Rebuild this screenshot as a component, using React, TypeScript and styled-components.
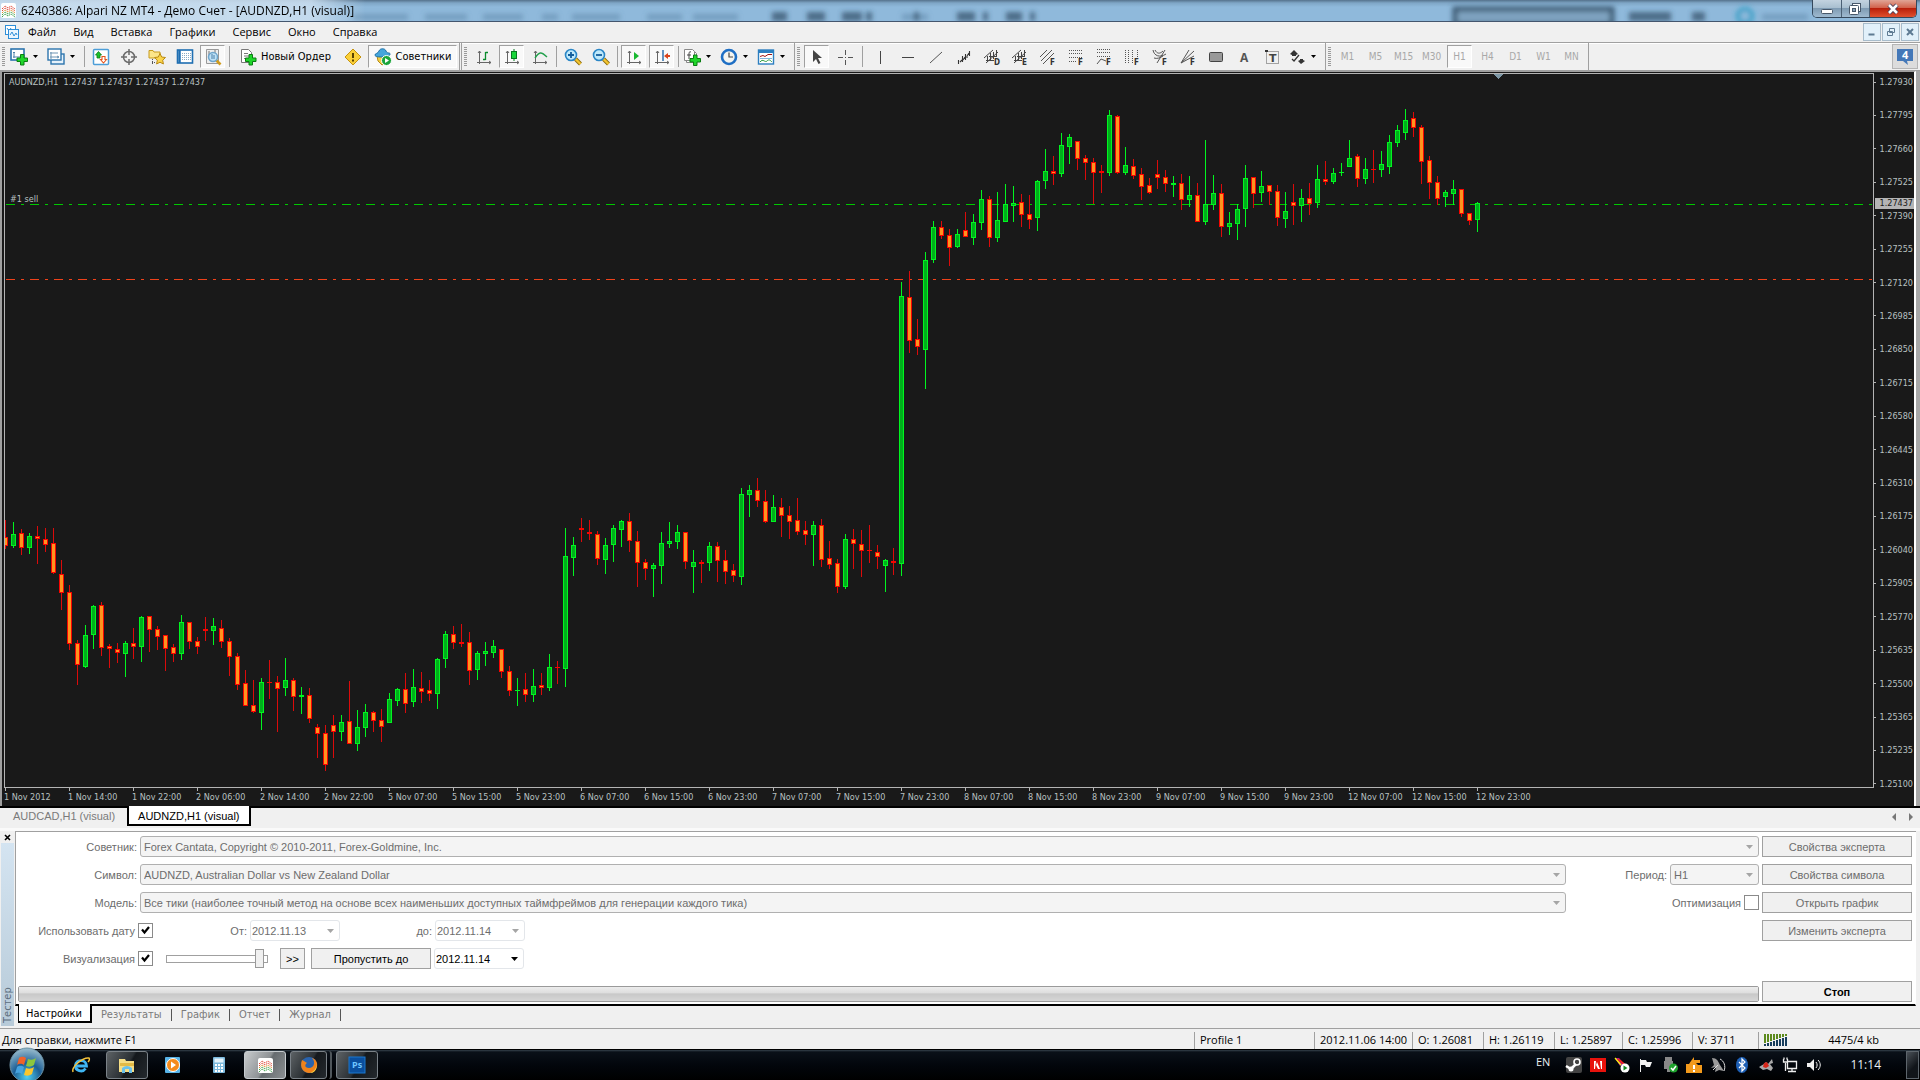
import React, { useState } from "react";
import styled, { createGlobalStyle, css } from "styled-components";

const uiFont = `"Open Sans", "Noto Sans", sans-serif`;
const tahoma = `"DejaVu Sans Condensed", "DejaVu Sans", sans-serif`;
const sansSerif = `"Liberation Sans", Arial, sans-serif`;

const Global = createGlobalStyle`
  * { box-sizing: border-box; }
  body { margin: 0; background: #f0f0f0; font: 11px/14px ${tahoma}; color: #000; }
  button, input, select { font: inherit; color: inherit; margin: 0; }
  button { padding: 0; border: 0; background: none; }
  svg { display: block; flex: none; overflow: visible; }
`;

const Shell = styled.div`
  min-height: 100vh;
  display: flex;
  flex-direction: column;
`;

/* ---------- title bar ---------- */

const TitleBar = styled.header`
  position: relative;
  height: 22px;
  display: flex;
  align-items: flex-start;
  justify-content: space-between;
  background: linear-gradient(#55728c 0, #7fa6c6 3px, #8fb9db 7px, #8fb9db 100%);
  border-bottom: 1px solid #44566e;
  overflow: hidden;
`;

const Backdrop = styled.svg`
  position: absolute;
  inset: 0;
  width: 100%;
  height: 100%;
`;

const Title = styled.h1`
  position: relative;
  margin: 0;
  padding: 2px 12px 2px 1px;
  display: flex;
  align-items: center;
  gap: 5px;
  font: 12px/17px ${uiFont};
  white-space: pre;
  background: linear-gradient(90deg, rgba(205, 224, 240, 0.9) 0, rgba(205, 224, 240, 0.85) 85%, rgba(200, 222, 240, 0) 100%);
`;

const WindowButtons = styled.div`
  position: relative;
  display: flex;
  width: 105px;
  height: 18px;
  margin-right: 3px;
  border: 1px solid #35485c;
  border-top: 0;
  border-radius: 0 0 5px 5px;
  overflow: hidden;
`;

const WindowButton = styled.button<{ $close?: boolean }>`
  display: grid;
  place-items: center;
  flex: ${(p) => (p.$close ? "0 0 47px" : "1")};
  border-left: 1px solid #4b6075;
  background: ${(p) =>
    p.$close
      ? "linear-gradient(#e0a596 0, #d2634c 45%, #b9200b 50%, #e0502f 100%)"
      : "linear-gradient(#c3d3e0 0, #a9bfd0 45%, #7f9bb3 50%, #9fbad0 100%)"};
  &:first-child { border-left: 0; }
`;

/* ---------- menu ---------- */

const MenuBar = styled.nav`
  height: 20px;
  display: flex;
  align-items: center;
  padding: 0 1px 0 5px;
  background: #f0f0f0;
`;

const MenuItem = styled.button`
  height: 20px;
  padding: 0 8px 0 9px;
  font: 11px/20px ${uiFont};
`;

const MdiButtons = styled.div`
  display: flex;
  gap: 1px;
  margin-left: auto;
`;

const MdiButton = styled.button`
  width: 18px;
  height: 18px;
  display: grid;
  place-items: center;
  border: 1px solid #a8bccb;
  background: #e1f0fa;
`;

/* ---------- toolbar ---------- */

const ToolBar = styled.div`
  height: 29px;
  display: flex;
  align-items: stretch;
  border-top: 1px solid #a0a0a0;
  border-bottom: 1px solid #a0a0a0;
  box-shadow: inset 0 1px #fff;
  background: #f0f0f0;
`;

const ToolGroup = styled.div<{ $double?: boolean }>`
  display: flex;
  align-items: center;
  padding: 0 2px;
  border-right: 1px solid #a0a0a0;
  ${(p) =>
    p.$double &&
    css`
      padding-right: 0;
      border-right: 3px double #a0a0a0;
    `}
`;

const Grip = styled.span`
  width: 3px;
  height: 20px;
  margin-right: 3px;
  background: repeating-linear-gradient(#9a9a9a 0 1px, #f0f0f0 1px 2px);
`;

const Separator = styled.span<{ $wide?: boolean }>`
  width: 1px;
  height: 21px;
  margin: 0 ${(p) => (p.$wide ? 3 : 2)}px;
  background: #a0a0a0;
`;

const ToolButton = styled.button<{ $pressed?: boolean; $w?: number }>`
  width: ${(p) => p.$w ?? 25}px;
  height: 23px;
  margin: 0 2px 0 1px;
  display: flex;
  align-items: center;
  justify-content: center;
  gap: 4px;
  border: 1px solid transparent;
  white-space: nowrap;
  ${(p) =>
    p.$pressed &&
    css`
      background: #f9f9f9;
      border-color: #a0a0a0 #fff #fff #a0a0a0;
    `}
`;

const DropButton = styled(ToolButton)`
  width: 34px;
  justify-content: flex-start;
  gap: 5px;
`;

const PeriodButton = styled(ToolButton)`
  color: #a8a8a8;
  font-size: 10px;
`;

const ChatButton = styled.button`
  width: 26px;
  height: 25px;
  margin: 1px 2px 0 auto;
  display: grid;
  place-items: center;
  border: 1px solid #b5b5b5;
  background: #dcdcdc;
`;

/* ---------- chart ---------- */

const ChartWindow = styled.main`
  flex: 1;
  display: grid;
  grid-template-columns: 1fr 40px;
  grid-template-rows: 1fr 18px;
  min-height: 400px;
  padding: 1px 0 0 2px;
  margin: 0 4px 0 0;
  border: solid #a0a0a0;
  border-width: 1px 0 0 2px;
  border-right: 2px solid #fff;
  background: #191919;
  color: #b8c0c0;
  font: 9px/12px ${tahoma};
  box-shadow: 4px 0 #a8a8a8;
`;

const Plot = styled.section`
  position: relative;
  border: 1px solid #b4b4b4;
  overflow: hidden;
`;

const PlotDrawing = styled.svg`
  position: absolute;
  width: 100%;
  height: 100%;
`;

const Quote = styled.p`
  position: relative;
  margin: 2px 4px;
  white-space: pre;
`;

const OrderTag = styled.span`
  position: absolute;
  left: 5px;
  top: 119px;
`;

const PriceAxis = styled.aside`
  position: relative;
  display: flex;
  flex-direction: column;
  justify-content: space-between;
  margin: 3px 0 -2px;
  text-align: right;
`;

const Price = styled.span`
  display: flex;
  align-items: center;
  justify-content: space-between;
  padding-right: 1px;
  &::before { content: ""; width: 2px; height: 1px; background: #b4b4b4; }
`;

const CurrentPrice = styled.span`
  position: absolute;
  left: 1px;
  right: 0;
  top: 122px;
  height: 11px;
  padding-right: 1px;
  line-height: 11px;
  background: #b4b4b4;
  color: #191919;
`;

const TimeAxis = styled.footer`
  display: flex;
  overflow: hidden;
  white-space: nowrap;
`;

const TimeMark = styled.span`
  flex: 0 0 64px;
  height: 18px;
  padding-top: 3px;
  &::before { content: ""; display: block; width: 1px; height: 3px; margin: -3px 0 0 1px; background: #b4b4b4; }
`;

const ChartTabs = styled.div`
  height: 25px;
  display: flex;
  align-items: flex-start;
  padding-left: 1px;
  border-top: 2px solid #000;
  background: #f0f0f0;
  box-shadow: inset 0 -3px #fafafa;
`;

const ChartTab = styled.button<{ $active?: boolean }>`
  height: 19px;
  padding: 0 12px 2px;
  font: 11px/17px ${sansSerif};
  color: #7a7a7a;
  ${(p) =>
    p.$active &&
    css`
      color: #000;
      background: #fff;
      border: solid #000;
      border-width: 0 2px 2px;
      margin-top: -2px;
      height: 20px;
      padding: 2px 9px 0;
    `}
`;

const TabArrows = styled.div`
  display: flex;
  gap: 12px;
  margin: 5px 6px 0 auto;
`;

/* ---------- tester ---------- */

const Tester = styled.section`
  display: grid;
  grid-template-columns: 15px 1fr;
  height: 197px;
  background: #f0f0f0;
  padding-right: 4px;
  font: 11px/14px ${sansSerif};
`;

const Side = styled.div`
  display: flex;
  flex-direction: column;
  align-items: center;
  padding-right: 1px;
`;

const CloseButton = styled.button`
  width: 12px;
  height: 12px;
  display: grid;
  place-items: center;
`;

const SideTitle = styled.h2`
  flex: 1;
  align-self: stretch;
  margin: 0 0 2px 1px;
  padding-top: 3px;
  font: 11px/13px ${tahoma};
  color: #5b6c7c;
  writing-mode: vertical-rl;
  transform: rotate(180deg);
  background: linear-gradient(#b7cad8, #d4e4f1);
`;

const Body = styled.div`
  display: flex;
  flex-direction: column;
  border-top: 1px solid #a0a0a0;
`;

const Panel = styled.form`
  flex: 1;
  display: grid;
  grid-template-columns: 1fr 150px;
  align-content: space-between;
  gap: 3px;
  padding: 4px 3px 2px 0;
  border-left: 1px solid #a0a0a0;
  border-right: 1px solid #fff;
  border-bottom: 2px solid #000;
  background: #fff;
  color: #6d6d6d;
`;

const Stack = styled.div`
  display: flex;
  flex-direction: column;
  gap: 7px;
`;

const Row = styled.div`
  height: 21px;
  display: flex;
  align-items: center;
  gap: 3px;
`;

const Label = styled.label<{ $w?: number }>`
  flex: 0 0 ${(p) => (p.$w ? `${p.$w}px` : "auto")};
  text-align: right;
  white-space: nowrap;
`;

const RightCell = styled.div`
  flex: 0 0 190px;
  display: flex;
  align-items: center;
  justify-content: flex-end;
  gap: 3px;
`;

const SelectBox = styled.span<{ $w?: number; $date?: boolean }>`
  flex: ${(p) => (p.$w ? `0 0 ${p.$w}px` : "1 1 0")};
  height: 21px;
  display: grid;
  grid-template-columns: 1fr 16px;
  align-items: center;
  border: 1px solid ${(p) => (p.$date ? "#e3e6ea" : "#b0b0b0")};
  border-radius: 3px;
  background: ${(p) => (p.$date ? "#fff" : "#f4f4f4")};
`;

const Select = styled.select<{ $strong?: boolean }>`
  grid-area: 1 / 1 / 2 / 3;
  width: 100%;
  height: 19px;
  padding: 0 16px 0 ${(p) => (p.$strong === undefined ? 3 : 1)}px;
  border: 0;
  background: none;
  appearance: none;
  opacity: 1;
  color: ${(p) => (p.$strong ? "#000" : "#6d6d6d")};
`;

const SelectArrow = styled.svg`
  grid-area: 1 / 2;
  pointer-events: none;
  margin-left: 4px;
`;

const Check = styled.input`
  appearance: none;
  width: 15px;
  height: 15px;
  border: 1px solid #8a8a8a;
  background: #fff;
  &:checked {
    background: #fff
      url("data:image/svg+xml,%3Csvg xmlns='http://www.w3.org/2000/svg' viewBox='0 0 13 13'%3E%3Cpath d='M3 5.5l2.5 3L10 3' fill='none' stroke='black' stroke-width='2.2'/%3E%3C/svg%3E");
  }
`;

const Slider = styled.input`
  appearance: none;
  width: 102px;
  min-width: 0;
  height: 20px;
  margin: 0 9px 0 10px;
  background: linear-gradient(#a0a0a0, #a0a0a0) 0 6px / 100% 1px no-repeat,
    linear-gradient(#a0a0a0, #a0a0a0) 0 13px / 100% 1px no-repeat,
    linear-gradient(#a0a0a0, #a0a0a0) 0 6px / 1px 8px no-repeat,
    linear-gradient(#a0a0a0, #a0a0a0) 100% 6px / 1px 8px no-repeat;
  &::-webkit-slider-thumb {
    appearance: none;
    width: 9px;
    height: 19px;
    border: 1px solid #999;
    background: #f0f0f0;
  }
`;

const PushButton = styled.button<{ $w?: number; $live?: boolean; $bold?: boolean }>`
  width: ${(p) => (p.$w ? `${p.$w}px` : "100%")};
  height: 21px;
  border: 1px solid #a0a0a0;
  background: #f0f0f0;
  color: ${(p) => (p.$live ? "#000" : "#6d6d6d")};
  font-weight: ${(p) => (p.$bold ? 700 : 400)};
`;

const Progress = styled.progress`
  appearance: none;
  display: block;
  width: calc(100% - 2px);
  height: 16px;
  margin: 5px 0 0 2px;
  border: 1px solid #9a9a9a;
  border-radius: 2px;
  &::-webkit-progress-bar { background: linear-gradient(#ececec 0, #dedede 40%, #c8c8c8 50%, #d6d6d6 100%); }
`;

const TesterTabs = styled.div`
  height: 22px;
  display: flex;
  align-items: flex-start;
  padding-left: 3px;
`;

const TesterTab = styled.button<{ $active?: boolean }>`
  position: relative;
  height: 18px;
  padding: 0 10px 0 9px;
  font: 11px/18px ${tahoma};
  color: #7a7a7a;
  &::after { content: ""; position: absolute; right: 0; top: 3px; height: 12px; border-right: 1px solid #555; }
  ${(p) =>
    p.$active &&
    css`
      color: #000;
      margin-top: -2px;
      height: 19px;
      padding: 1px 8px 0 7px;
      background: #fff;
      border: solid #000;
      border-width: 0 2px 2px 1px;
      &::after { display: none; }
    `}
`;

/* ---------- status bar ---------- */

const StatusBar = styled.footer`
  height: 22px;
  display: flex;
  align-items: center;
  padding-top: 2px;
  border-top: 1px solid #a0a0a0;
  border-bottom: 1px solid #000;
  background: #f0f0f0;
  font: 11px/16px ${uiFont};
`;

const Hint = styled.span`
  flex: 1;
  padding-left: 2px;
`;

const StatusCell = styled.span<{ $w: number }>`
  flex: 0 0 ${(p) => p.$w}px;
  height: 17px;
  display: flex;
  justify-content: space-between;
  align-items: center;
  padding: 0 5px;
  white-space: nowrap;
  border-left: 1px solid #a0a0a0;
  &:last-child { padding-right: 41px; }
`;

/* ---------- taskbar ---------- */

const TaskBar = styled.footer`
  height: 30px;
  display: flex;
  align-items: center;
  padding-left: 5px;
  color: #e8eef2;
  background: linear-gradient(#36424c 0, #0a1018 2px, #02060c 50%, #000 100%);
`;

const Start = styled.button`
  align-self: flex-end;
  width: 44px;
  height: 36px;
  margin: -6px 11px -2px 0;
`;

const TaskButton = styled.button<{ $open?: boolean; $active?: boolean }>`
  width: 42px;
  height: 28px;
  margin-right: 4px;
  display: grid;
  place-items: center;
  border: 1px solid transparent;
  border-radius: 3px;
  ${(p) =>
    p.$open &&
    css`
      border-color: #7b8288;
      background: linear-gradient(120deg, #5d6265 0, #2b3034 50%, #14181c 55%, #24292d 100%);
    `}
  ${(p) =>
    p.$active &&
    css`
      border-color: #c6cbcf;
      background: linear-gradient(120deg, #c8cbcd 0, #8e9295 50%, #666b6f 55%, #8b8f92 100%);
    `}
`;

const Stacked = styled.span`
  display: flex;
  margin-right: 4px;
  padding-right: 3px;
  border-right: 2px solid #4f565b;
  border-radius: 3px;
  ${TaskButton} { width: 37px; margin-right: 0; }
`;

const Tray = styled.div`
  display: flex;
  align-items: center;
  gap: 8px;
  height: 100%;
  margin-left: auto;
  font: 11px/14px ${uiFont};
`;

const Language = styled.span`
  margin: -6px 8px 0 0;
`;

const Clock = styled.time`
  margin: 0 17px 0 20px;
  font-size: 12px;
`;

const ShowDesktop = styled.button`
  width: 13px;
  height: 28px;
  margin-right: 1px;
  border: 1px solid #5d656c;
  background: linear-gradient(135deg, #4a5057, #11151a 60%);
`;

/* ---------- icons ---------- */

const Svg = ({ w = 18, h = 18, children }: { w?: number; h?: number; children: React.ReactNode }) => (
  <svg width={w} height={h} viewBox={`0 0 ${w} ${h}`} fill="none" aria-hidden="true">
    {children}
  </svg>
);

const Caret = () => (
  <Svg w={5} h={3}>
    <path d="M0 0h5L2.500 3z" fill="#000" />
  </Svg>
);

const Plus = ({ x, y }: { x: number; y: number }) => (
  <path
    transform={`translate(${x} ${y})`}
    d="M4 .5h3.500V4H11v3.500H7.500V11H4V7.500H.5V4H4z"
    fill="#1fd62a"
    stroke="#0a7d12"
  />
);

const AppMark = () => (
  <Svg w={15} h={15}>
    <rect width="15" height="15" rx="2" fill="#fff" />
    <path d="M1 6l3-3 3 2 3-2 4 3M1 8l3-3 3 2 3-2 4 3" stroke="#e24a3b" strokeDasharray="1.500 .7" />
    <path d="M1 10l3-3 3 2 3-2 4 3" stroke="#e08c2c" strokeDasharray="1.500 .7" />
    <path d="M1 12l3-3 3 2 3-2 4 3M1 14l3-3 3 2 3-2 4 3" stroke="#3fa34c" strokeDasharray="1.500 .7" />
  </Svg>
);

const ChartDoc = () => (
  <Svg w={14} h={14}>
    <rect x=".5" y=".5" width="10" height="9" fill="#fff" stroke="#2f8fd8" />
    <path d="M2 3l2 3 2-3" stroke="#2f8fd8" />
    <rect x="3.500" y="4.500" width="10" height="9" fill="#e9f5ff" stroke="#2f8fd8" />
    <path d="M5 10l2-3 2 4 2-3 1 2" stroke="#2f8fd8" />
  </Svg>
);

const Axes = ({ children }: { children?: React.ReactNode }) => (
  <Svg>
    <path d="M4.500 3v13M2 14.500h14M3 5l1.500-2L6 5M14 13l2 1.500-2 1.500" stroke="#666" />
    {children}
  </Svg>
);

const Magnifier = ({ minus }: { minus?: boolean }) => (
  <Svg>
    <path d="M11.500 11l5 5" stroke="#8a6a0d" strokeWidth="4" />
    <path d="M11.500 11l5 5" stroke="#f3c531" strokeWidth="2.400" />
    <circle cx="7" cy="7" r="5.500" fill="#bfe9fb" stroke="#2a86c6" strokeWidth="1.600" />
    <path d={minus ? "M4 7h6" : "M4 7h6M7 4v6"} stroke="#135e9c" strokeWidth="1.800" />
  </Svg>
);

const Letter = ({ ch }: { ch: string }) => (
  <text x="11" y="17" fontSize="8" fontWeight="700" fontFamily="DejaVu Sans Condensed" fill="#333">
    {ch}
  </text>
);

const icons: Record<string, React.ReactNode> = {
  newChart: (
    <Svg>
      <rect x="1" y="1" width="13" height="11" fill="#fff" stroke="#2c74ad" strokeWidth="1.600" />
      <path d="M4 4v6M3 5l1-1 1 1M3 9h8M10 8l1 1-1 1" stroke="#4c81a8" />
      <Plus x={6.5} y={6} />
    </Svg>
  ),
  profiles: (
    <Svg>
      <rect x="4" y="6" width="13" height="10" fill="#e6f2fb" stroke="#2c74ad" strokeWidth="1.400" />
      <rect x="1" y="1" width="13" height="11" fill="#fff" stroke="#2c74ad" strokeWidth="1.400" />
      <path d="M4 4v7M3 5h8M3 9h9M10 8l2 1-2 1" stroke="#6d94b3" />
    </Svg>
  ),
  market: (
    <Svg>
      <rect x="1.500" y="1.500" width="15" height="15" rx="1" fill="#fff" stroke="#4d9ed8" strokeWidth="1.500" />
      <path d="M6.500 3.500l3 3.500H8v3H5V7H3.500z" fill="#19c22a" stroke="#0c7a18" strokeWidth=".8" />
      <path d="M11.500 15l3-3.500H13v-3h-3v3H8.500z" fill="#fff" stroke="#e5541b" strokeWidth="1.100" />
    </Svg>
  ),
  cross: (
    <Svg>
      <circle cx="9" cy="9" r="5.500" stroke="#6b6b6b" strokeWidth="1.500" />
      <path d="M9 1v6M9 11v6M1 9h6M11 9h6" stroke="#6b6b6b" strokeWidth="1.500" />
    </Svg>
  ),
  navigator: (
    <Svg>
      <path d="M1 2.500h4l1 1.500h6v6H1z" fill="#fce58a" stroke="#c79b1c" />
      <path d="M4.500 11v6M4 14.500h4" stroke="#555" strokeDasharray="1 1" />
      <path d="M12 5.500l1.700 3.500 3.800.5-2.800 2.700.7 3.800-3.400-1.800L8.600 16l.7-3.800-2.800-2.700 3.800-.5z" fill="#fbd44b" stroke="#b98a12" />
    </Svg>
  ),
  list: (
    <Svg>
      <rect x="1.500" y="2" width="15" height="13" fill="#fff" stroke="#1f6fb2" strokeWidth="1.600" />
      <path d="M3.500 2v13" stroke="#1f6fb2" strokeWidth="2.500" />
      <path d="M6 5.500h9M6 7.500h9M6 9.500h9M6 11.500h9" stroke="#8aaac4" strokeDasharray="1 1" />
    </Svg>
  ),
  tester: (
    <Svg>
      <path d="M2.500 1.500h12v14h-12z" fill="#eee" stroke="#999" />
      <path d="M5 3v5M11 2v5" stroke="#777" />
      <path d="M12 12l4.500 4.500" stroke="#d09c1e" strokeWidth="2.600" />
      <circle cx="9" cy="9" r="4.500" fill="#bfe2f7" stroke="#6fa6cd" strokeWidth="1.500" />
      <path d="M8 6v5M10 7v4" stroke="#4a7fa8" />
    </Svg>
  ),
  order: (
    <Svg>
      <path d="M2.500 1.500h7l3 3v10h-10z" fill="#fff" stroke="#777" />
      <path d="M5 5.500h4M5 8h5M5 10.500h3" stroke="#777" />
      <Plus x={6} y={6} />
    </Svg>
  ),
  warning: (
    <Svg>
      <path d="M9 1l8 8-8 8-8-8z" fill="#fbd038" stroke="#c6930f" strokeLinejoin="round" />
      <path d="M9 5v5M9 11.500v2" stroke="#5a4200" strokeWidth="2" />
    </Svg>
  ),
  experts: (
    <Svg>
      <path d="M3 8h11l-1 6-5 3-4-4z" fill="#f6cf45" stroke="#b48a16" />
      <path d="M1 7c0-2 3-1 4-4s6-3 7 0 4 1 4 3-3 3-7 3-8 0-8-2z" fill="#45a6dc" stroke="#1f6fa5" />
      <circle cx="12.500" cy="12.500" r="5" fill="#1ba53a" stroke="#fff" />
      <path d="M11 10l4 2.500-4 2.500z" fill="#fff" />
    </Svg>
  ),
  bars: <Axes><path d="M10.500 4v8M10.500 4.500H13M8 11.500h2.500" stroke="#0a8a2c" strokeWidth="1.300" /></Axes>,
  candles: <Axes><path d="M11 1v12" stroke="#067a20" /><rect x="8.500" y="3.500" width="5" height="7" fill="#19d63a" stroke="#067a20" /></Axes>,
  line: <Axes><path d="M4 10c4-6 6-7 12-1" stroke="#22a04c" strokeWidth="1.400" /></Axes>,
  zoomIn: <Magnifier />,
  zoomOut: <Magnifier minus />,
  scroll: <Axes><path d="M9 4l5 4-5 4z" fill="#18b82f" /></Axes>,
  shift: <Axes><path d="M10 2v11" stroke="#2367a8" strokeWidth="1.400" /><path d="M11 8l4-3v2h2v2h-2v2z" fill="#d8431b" /></Axes>,
  indicators: (
    <Svg>
      <path d="M3.500 3.500h8l2 2v9h-10z" fill="#fff" stroke="#888" />
      <path d="M1.500 1.500h8l2 2v9h-10z" fill="#fff" stroke="#888" />
      <path d="M8 4c-2-1-2 1-2 2v5M4 7h4" stroke="#444" />
      <Plus x={6.5} y={6.5} />
    </Svg>
  ),
  clock: (
    <Svg>
      <circle cx="9" cy="9" r="7" fill="#f5f5f0" stroke="#1f6fc4" strokeWidth="2.600" />
      <path d="M9 4.500V9h4" stroke="#444" strokeWidth="1.200" />
    </Svg>
  ),
  template: (
    <Svg>
      <rect x="1.500" y="2" width="15" height="14" fill="#fff" stroke="#2d7fc0" strokeWidth="1.400" />
      <path d="M1.500 3.500h15" stroke="#2d7fc0" strokeWidth="3" />
      <path d="M3 8.500l3-1 2 1 3-2h4" stroke="#a01414" />
      <path d="M3 10.500h12" stroke="#2d7fc0" strokeWidth=".6" />
      <path d="M3 14c3-4 5 1 7-1s3-1 5 1" stroke="#2b9b3c" />
    </Svg>
  ),
  pointer: <Svg><path d="M5 2v12l3-3 2.500 5 2-1-2.500-5h4z" fill="#444" /></Svg>,
  crosshair: <Svg><path d="M9.500 2v5M9.500 12v5M2 9.500h5M12 9.500h5M9 9.500h1" stroke="#555" /></Svg>,
  vline: <Svg><path d="M9.500 3v13" stroke="#444" /></Svg>,
  hline: <Svg><path d="M3 9.500h12" stroke="#444" /></Svg>,
  trend: <Svg><path d="M3 15L15 4" stroke="#555" /></Svg>,
  zig: <Svg><path d="M3.500 16v-4M5 14l2-2M7.500 14V8M8 12l2-3M10.500 12V6M12 8v2M12 8l2-3M14.500 8V3" stroke="#333" strokeWidth="1.100" /></Svg>,
  zigD: <Svg><path d="M1 10L10 2M3 15L15 4M4.500 8v6M7.500 5v8M10.500 4v7M13.500 2v7M3 12.500h8M6 8.500h8" stroke="#444" /><Letter ch="D" /></Svg>,
  zigE: <Svg><path d="M1 10L10 2M3 15L15 4M4.500 8v6M7.500 5v8M10.500 4v7M13.500 2v7M3 12.500h8M6 8.500h8" stroke="#444" /><Letter ch="E" /></Svg>,
  fiboCh: <Svg><path d="M1 9L8 2M2 13L13 2M4 16L15 5" stroke="#555" /><Letter ch="F" /></Svg>,
  fibo: <Svg><path d="M2 2.500h14M2 5.500h14M2 9.500h14M2 13.500h8" stroke="#555" strokeDasharray="1 1" /><Letter ch="F" /></Svg>,
  fiboExp: <Svg><path d="M2 1.500h14M2 4.500h14M2 8.500h14" stroke="#555" strokeDasharray="1 1" /><path d="M2 16l4-5 5 2" stroke="#555" /><Letter ch="F" /></Svg>,
  fiboTime: <Svg><path d="M2.500 2v14M5.500 2v14M9.500 2v14M14.500 2v9" stroke="#555" strokeDasharray="1 1" /><Letter ch="F" /></Svg>,
  fiboArc: <Svg><path d="M2 2c1 6 7 8 13 4M4 2c2 4 5 4 8 1M14 2L6 15M3 10c3 1 6 0 9-2" stroke="#555" /><Letter ch="F" /></Svg>,
  fiboFan: <Svg><path d="M2 15L15 3M2 15L10 2M2 15l13-7" stroke="#555" /><Letter ch="F" /></Svg>,
  rect: <Svg><rect x="2.500" y="4.500" width="13" height="9" rx="1" fill="#999" stroke="#444" /></Svg>,
  text: <Svg><text x="5" y="14" fontSize="12" fontWeight="700" fontFamily="Open Sans" fill="#555">A</text></Svg>,
  label: (
    <Svg>
      <rect x="3.500" y="3.500" width="12" height="12" stroke="#555" strokeDasharray="1 1" />
      <text x="6" y="14" fontSize="11" fontWeight="700" fontFamily="DejaVu Sans" fill="#444">T</text>
      <rect x="2" y="2" width="3" height="2" fill="#333" />
    </Svg>
  ),
  arrows: <Svg><path d="M6 2l4 4-2 1v1H4V7L2 6zM13 16l4-3-2-1v-1h-3v1l-2 1z" fill="#333" /><path d="M4 11l2 2 5-6" stroke="#333" strokeWidth="1.300" /></Svg>,
};

/* ---------- chart data ---------- */

/*
 * Each bar is "direction high bodyTop bodyBottom low". Levels are counted downwards
 * in thirds of a pixel row from the origin of the session they belong to.
 */
const sessions: { origin: number; bars: string }[] = [
  {
    origin: 426,
    bars:
      "r 60 111 137 147,g 66 102 138 144,r 87 99 144 164,g 99 108 144 161,r 77 108 117 192,r 84 117 135 156,r 84 129 219 222,r 180 222 279 330," +
      "r 255 276 432 450,r 420 429 495 555,g 375 405 501 504,g 315 318 405 447,r 306 315 444 468,r 432 438 447 504,r 429 447 459 489,g 423 429 462 531," +
      "r 384 429 441 477,g 348 351 441 486,r 348 348 390 456,r 378 387 411 450,r 405 405 447 513,r 432 441 462 486,g 345 366 462 480,r 366 366 426 447," +
      "r 411 423 441 462,r 351 387 393 423,g 354 378 393 435,r 360 384 426 444,r 414 423 471 528,r 459 468 555 570,r 510 549 618 618,r 540 615 636 640," +
      "g 534 546 639 690,r 480 546 549 597,r 528 546 567 696,g 474 540 564 588,r 534 540 591 633,g 561 585 591 642,r 564 585 657 669,r 672 681 702 774," +
      "r 675 699 795 812,r 645 675 696 774,g 645 666 696 723,r 543 663 732 732,g 630 681 732 753,g 612 636 684 711,r 633 636 663 696,r 627 660 681 726," +
      "g 579 597 669 669,g 564 567 603 618,r 519 567 612 639,g 507 561 606 621",
  },
  {
    origin: 376,
    bars:
      "r 666 714 726 759,r 690 720 732 753,g 624 627 732 777,g 543 552 627 654,r 528 552 579 597,r 522 576 582 591,r 546 576 663 705,g 603 609 660 690," +
      "g 576 603 612 648,g 570 588 609 624,r 597 597 666 684,r 648 663 723 738,g 684 720 723 768,r 669 717 735 756,g 657 708 735 756,r 669 705 714 735," +
      "g 612 651 714 723,r 633 651 654 702,g 234 318 657 711,g 261 285 324 378,r 204 234 240 276,r 210 246 252 270,r 243 252 327 345,g 264 285 330 372," +
      "g 225 234 285 336,g 210 213 240 291,r 189 213 273 306,r 243 273 339 411,r 327 336 357 390,g 339 345 357 441,g 246 279 348 402,g 216 273 282 294," +
      "g 225 246 276 297,r 246 246 336 357,g 300 336 351 429,r 330 336 342 399,g 276 288 339 363,r 276 288 333 396,r 300 330 366 402,r 342 360 378 396," +
      "g 114 132 381 405,g 105 120 135 201,r 84 120 153 171,r 120 153 216 219,g 135 171 216 216,r 144 171 198 261,r 168 195 216 267,r 144 210 246 255," +
      "r 213 240 255 285,g 213 225 255 348,r 207 225 330 351,r 273 324 345 357,r 327 339 411 429,g 252 267 411 417,r 237 267 282 357,r 240 282 303 381," +
      "r 225 300 303 339,r 285 306 321 357,g 327 330 348 426,r 294 333 339 375",
  },
  {
    origin: 16,
    bars:
      "g 576 618 1422 1458,r 543 621 753 789,r 687 747 771 795,g 486 510 780 897,g 393 411 510 519,r 393 411 438 447,r 417 435 474 528,g 417 432 471 474," +
      "r 366 420 441 441,g 372 396 444 465,g 300 327 399 420,r 318 327 444 471,g 306 390 444 456,g 282 342 396 396,g 288 339 348 396,r 312 336 375 411," +
      "r 315 372 390 417,g 270 273 384 423,g 177 243 273 297,r 198 243 252 285,g 129 165 252 261,g 132 141 171 222,r 153 153 207 240,r 195 204 219 270," +
      "r 204 216 249 342,r 225 243 249 309,g 60 75 249 258,r 75 78 249 252,g 171 225 249 255,r 207 228 258 267,r 234 252 291 330,r 264 285 309 312," +
      "r 210 252 264 297,r 240 261 282 306,g 258 279 285 321,r 252 279 330 360,g 258 315 330 351,r 279 315 396 396,g 150 342 396 405,g 255 309 345 360," +
      "r 282 309 411 441,g 366 399 411 435,g 342 357 402 450,g 225 264 357 411,r 261 261 312 354,g 243 288 309 336,r 285 285 306 345,r 285 303 384 408," +
      "g 306 363 387 414,r 282 336 348 405,g 297 324 348 396,r 279 324 342 375,g 225 267 339 354,r 213 267 276 285,g 234 249 276 282,g 219 246 249 258," +
      "g 150 204 231 231,r 192 198 267 291,g 204 237 267 282,r 180 237 240 279,g 183 222 240 261,g 135 156 231 252,g 105 120 159 171,g 57 90 129 150," +
      "r 66 84 114 141,r 105 111 216 282,r 198 210 279 327,r 258 276 327 345,g 300 306 321 351,g 270 297 312 345,r 297 297 372 381,r 369 369 393 405," +
      "g 336 339 390 426",
  },
];

const candles = sessions
  .flatMap(({ origin, bars }) =>
    bars.split(",").map((bar) => {
      const [dir, ...levels] = bar.split(" ");
      return { up: dir === "g", y: levels.map((v) => origin + Math.round(Number(v) / 3)) };
    })
  );

const Candle = ({ x, up, y }: { x: number; up: boolean; y: number[] }) => {
  const [high, top, bottom, low] = y;
  const edge = up ? "#00f51f" : "#f80400";
  return (
    <g>
      <rect x={x} y={high} width={1} height={Math.max(low - high, 1)} fill={up ? edge : "#dc0a0a"} />
      <rect x={x - 2} y={top} width={5} height={bottom - top} fill={edge} />
      {bottom - top > 2 && <rect x={x - 1} y={top + 1} width={3} height={bottom - top - 2} fill={up ? "#00ae1c" : "#ff931e"} />}
    </g>
  );
};

const prices = [
  ...Array.from({ length: 20 }, (_, i) => ((127930 - i * 135) / 100000).toFixed(5)),
  "1.25235",
  "1.25100",
];
const times = (
  "1 Nov 2012,1 Nov 14:00,1 Nov 22:00,2 Nov 06:00,2 Nov 14:00,2 Nov 22:00,5 Nov 07:00,5 Nov 15:00,5 Nov 23:00,6 Nov 07:00,6 Nov 15:00,6 Nov 23:00," +
  "7 Nov 07:00,7 Nov 15:00,7 Nov 23:00,8 Nov 07:00,8 Nov 15:00,8 Nov 23:00,9 Nov 07:00,9 Nov 15:00,9 Nov 23:00,12 Nov 07:00,12 Nov 15:00,12 Nov 23:00"
).split(",");

/* ---------- pieces ---------- */

type DropProps = { id: string; value: string; w?: number; date?: boolean; live?: boolean; label?: string };
const Drop = ({ id, value, w, date, live, label }: DropProps) => (
  <SelectBox $w={w} $date={date}>
    <Select id={id} disabled={!live} $strong={date ? !!live : undefined} aria-label={label}>
      <option>{value}</option>
    </Select>
    <SelectArrow width="7" height="4" viewBox="0 0 7 4">
      <path d="M0 0h7L3.500 4z" fill={live ? "#000" : "#a5a5a5"} />
    </SelectArrow>
  </SelectBox>
);

const Tools = ({ names, pressed = [] }: { names: string[]; pressed?: string[] }) => (
  <>
    {names.map((n) => (
      <ToolButton key={n} aria-label={n} $pressed={pressed.includes(n)}>
        {icons[n]}
      </ToolButton>
    ))}
  </>
);

const MenuTool = ({ name }: { name: string }) => (
  <DropButton aria-label={name}>
    {icons[name]}
    <Caret />
  </DropButton>
);

const smudges = [
  [352, 56], [425, 42], [483, 40], [542, 16], [572, 48], [647, 35], [693, 45], [902, 26], [1762, 46],
];
const darkSmudges = [[772, 15], [807, 18], [842, 20], [866, 6], [914, 5], [957, 18], [983, 5], [1006, 16], [1030, 5], [1629, 42], [1692, 13]];

const trayIcons: [string, React.ReactNode][] = [
  ["Steam", <Svg w={16} h={16}><rect width="16" height="16" rx="2" fill="#444" /><circle cx="11" cy="5" r="3" stroke="#fff" strokeWidth="1.600" /><circle cx="5" cy="12" r="2.500" fill="#fff" /><path d="M5 12l5-5M0 9l5 3" stroke="#fff" strokeWidth="2.600" /></Svg>],
  ["Adobe", <Svg w={16} h={16}><rect y="1" width="16" height="14" fill="#e8120c" /><path d="M4 12V4l2 0-1 8zM12 12V4l-2 0 1 8zM7 5l3 7H8L6 8z" fill="#fff" /></Svg>],
  ["Player", <Svg w={16} h={16}><path d="M1 1l5 8 4-2-5-6z" fill="#a1169b" /><path d="M1 1l6 7" stroke="#ff0" strokeWidth="1.200" /><path d="M4 2l7 6" stroke="#e22" strokeWidth="2" /><circle cx="11" cy="11" r="4.500" fill="#fff" /><path d="M9.500 8.500l4 2.500-4 2.500z" fill="#14871f" /></Svg>],
  ["Action center", <Svg w={16} h={16}><path d="M2.500 2v13" stroke="#eee" /><path d="M3 3h5l1 2h5l-2 5H8L7 8H3z" fill="#f2f2f2" /></Svg>],
  ["Safely remove", <Svg w={16} h={16}><path d="M3 0h7v4H3zM2 4h9v8H8v3H5v-3H2z" fill="#888" /><circle cx="11.500" cy="11" r="4.500" fill="#1fa32d" /><path d="M9 11l2 2 3-4" stroke="#fff" strokeWidth="1.500" /></Svg>],
  ["Castle", <Svg w={16} h={16}><path d="M0 7h3l2-3 3-4v3h6v3h-4l2 2h4v8H0z" fill="#f39a1b" /><path d="M7 8h2v4H7zM7 13h2v2H7z" fill="#fff" /></Svg>],
  ["Satellite", <Svg w={16} h={16}><path d="M2 1c5 0 6 3 8 7l4 6-5-1-4 2 1-5-5 1 3-3z" fill="#9a9a9a" /><path d="M10 2c4 2 6 7 4 12M3 13l5-5" stroke="#ddd" /></Svg>],
  ["Bluetooth", <Svg w={16} h={16}><ellipse cx="8" cy="8" rx="6" ry="8" fill="#1d5fb5" /><path d="M5 5l6 6-3 3V2l3 3-6 6" stroke="#fff" strokeWidth="1.200" /></Svg>],
  ["Device", <Svg w={16} h={16}><path d="M1 10l5-3 2-2 2 2 4-5 1 4-3 1 3 4-2 3-4-2-4 1z" fill="#aaa" /><path d="M6 6l3-1 2 4-3 2-3-1z" fill="#d6271b" /></Svg>],
  ["Network", <Svg w={16} h={16}><path d="M5.500 4.500h9v7h-9zM10 12v2.500M6 14.500h8M3.500 6v8M1.500 2v3h4V2M2 .500v2M5 .500v2" stroke="#eee" strokeWidth="1.300" /></Svg>],
  ["Volume", <Svg w={16} h={16}><path d="M1 6h3l4-4v12l-4-4H1z" fill="#eee" /><path d="M10 5c1.500 2 1.500 4 0 6M12 3c3 3 3 7 0 10" stroke="#eee" /></Svg>],
];

const App = () => {
  const [useDate, setUseDate] = useState(true);
  const [visual, setVisual] = useState(true);
  const [optimize, setOptimize] = useState(false);
  const [speed, setSpeed] = useState(96);

  return (
    <Shell>
      <Global />
      <TitleBar>
        <Backdrop aria-hidden="true">
          <defs>
            <filter id="soft" x="-5%" y="-100%" width="110%" height="300%">
              <feGaussianBlur stdDeviation="2.500" />
            </filter>
          </defs>
          <g filter="url(#soft)">
            {smudges.map(([x, w]) => <rect key={x} x={x} y={14} width={w} height={6} fill="#5f86a8" opacity=".55" />)}
            {darkSmudges.map(([x, w]) => <rect key={x} x={x} y={12} width={w} height={9} fill="#2f4b64" opacity=".7" />)}
            <rect x="1455" y="9" width="157" height="16" stroke="#3e5b74" strokeWidth="5" fill="#7ea3c0" />
            <circle cx="1745" cy="16" r="7" stroke="#2d9fc6" strokeWidth="4" fill="#8fb9db" />
          </g>
        </Backdrop>
        <Title><AppMark />6240386: Alpari NZ MT4 - Демо Счет - [AUDNZD,H1 (visual)]</Title>
        <WindowButtons>
          <WindowButton aria-label="Minimize"><Svg w={14} h={12}><rect x="1.500" y="6.500" width="11" height="4" rx="1" fill="#fff" stroke="#48586a" /></Svg></WindowButton>
          <WindowButton aria-label="Restore"><Svg w={14} h={14}><rect x="4.500" y="1.500" width="8" height="8" fill="#fff" stroke="#48586a" /><rect x="1.500" y="3.500" width="9" height="9" rx="1" fill="#fff" stroke="#48586a" /><rect x="4.500" y="6.500" width="3" height="3" fill="#8ba3b8" stroke="#48586a" /></Svg></WindowButton>
          <WindowButton $close aria-label="Close"><Svg w={14} h={12}><path d="M3 2l8 8M11 2l-8 8" stroke="#48405a" strokeWidth="4.500" /><path d="M3 2l8 8M11 2l-8 8" stroke="#fff" strokeWidth="2.600" /></Svg></WindowButton>
        </WindowButtons>
      </TitleBar>

      <MenuBar>
        <ChartDoc />
        {["Файл", "Вид", "Вставка", "Графики", "Сервис", "Окно", "Справка"].map((m) => <MenuItem key={m}>{m}</MenuItem>)}
        <MdiButtons>
          <MdiButton aria-label="Minimize chart"><Svg w={10} h={10}><path d="M1.500 7.500h6" stroke="#5d7a92" strokeWidth="2" /></Svg></MdiButton>
          <MdiButton aria-label="Restore chart"><Svg w={10} h={10}><path d="M3.500 1.500h5v4h-5zM1.500 4.500h5v4h-5z" fill="#e1f0fa" stroke="#5d7a92" /></Svg></MdiButton>
          <MdiButton aria-label="Close chart"><Svg w={10} h={10}><path d="M2 2l6 6M8 2l-6 6" stroke="#5d7a92" strokeWidth="2" /></Svg></MdiButton>
        </MdiButtons>
      </MenuBar>

      <ToolBar role="toolbar">
        <ToolGroup $double>
          <Grip />
          <MenuTool name="newChart" />
          <MenuTool name="profiles" />
          <Separator />
          <Tools names={["market", "cross", "navigator", "list", "tester"]} pressed={["tester"]} />
          <Separator />
          <ToolButton $w={104}>{icons.order}Новый Ордер</ToolButton>
          <Tools names={["warning"]} />
          <ToolButton $w={89} $pressed>{icons.experts}Советники</ToolButton>
        </ToolGroup>
        <ToolGroup>
          <Grip />
          <Tools names={["bars", "candles", "line"]} pressed={["candles"]} />
          <Separator />
          <Tools names={["zoomIn", "zoomOut"]} />
          <Separator />
          <Tools names={["scroll", "shift"]} pressed={["scroll", "shift"]} />
          <Separator />
          <MenuTool name="indicators" />
          <MenuTool name="clock" />
          <MenuTool name="template" />
        </ToolGroup>
        <ToolGroup>
          <Grip />
          <Tools names={["pointer", "crosshair"]} pressed={["pointer"]} />
          <Separator $wide />
          <Tools names={["vline", "hline", "trend", "zig", "zigD", "zigE", "fiboCh", "fibo", "fiboExp", "fiboTime", "fiboArc", "fiboFan", "rect", "text", "label"]} />
          <MenuTool name="arrows" />
        </ToolGroup>
        <ToolGroup>
          <Grip />
          {["M1", "M5", "M15", "M30", "H1", "H4", "D1", "W1", "MN"].map((p) => <PeriodButton key={p} $pressed={p === "H1"}>{p}</PeriodButton>)}
        </ToolGroup>
        <ChatButton aria-label="Messages">
          <Svg>
            <path d="M1 1h16v12h-6l1 4-5-4H1z" fill="#4478b8" />
            <text x="6" y="11" fontSize="11" fontWeight="700" fontFamily="Open Sans" fill="#fff">4</text>
          </Svg>
        </ChatButton>
      </ToolBar>

      <ChartWindow>
        <Plot>
          <PlotDrawing shapeRendering="crispEdges">
            <line x1="1" x2="100%" y1="130.500" y2="130.500" stroke="#00c800" strokeDasharray="9 6 3 6" />
            <line x1="1" x2="100%" y1="205.500" y2="205.500" stroke="#f0421a" strokeDasharray="9 6 3 6" />
            {candles.map((c, i) => <Candle key={i} x={i * 8} up={c.up} y={c.y} />)}
            <path d="M1489 0h9l-4.500 5z" fill="#7d97a6" />
          </PlotDrawing>
          <Quote>AUDNZD,H1  1.27437 1.27437 1.27437 1.27437</Quote>
          <OrderTag>#1 sell</OrderTag>
        </Plot>
        <PriceAxis>
          {prices.map((p) => <Price key={p}>{p}</Price>)}
          <CurrentPrice>1.27437</CurrentPrice>
        </PriceAxis>
        <TimeAxis>{times.map((t) => <TimeMark key={t}>{t}</TimeMark>)}</TimeAxis>
      </ChartWindow>

      <ChartTabs>
        <ChartTab>AUDCAD,H1 (visual)</ChartTab>
        <ChartTab $active>AUDNZD,H1 (visual)</ChartTab>
        <TabArrows>
          <Svg w={5} h={8}><path d="M4 0v8L0 4z" fill="#777" /></Svg>
          <Svg w={5} h={8}><path d="M0 0v8l4-4z" fill="#777" /></Svg>
        </TabArrows>
      </ChartTabs>

      <Tester>
        <Side>
          <CloseButton aria-label="Close tester"><Svg w={7} h={7}><path d="M1 1l5 5M6 1L1 6" stroke="#000" strokeWidth="1.600" /></Svg></CloseButton>
          <SideTitle>Тестер</SideTitle>
        </Side>
        <Body>
          <Panel onSubmit={(e) => e.preventDefault()}>
            <Stack>
              <Row>
                <Label $w={121} htmlFor="expert">Советник:</Label>
                <Drop id="expert" value="Forex Cantata, Copyright © 2010-2011, Forex-Goldmine, Inc." />
              </Row>
              <Row>
                <Label $w={121} htmlFor="symbol">Символ:</Label>
                <Drop id="symbol" value="AUDNZD, Australian Dollar vs New Zealand Dollar" />
                <RightCell>
                  <Label htmlFor="period">Период:</Label>
                  <Drop id="period" value="H1" w={89} />
                </RightCell>
              </Row>
              <Row>
                <Label $w={121} htmlFor="model">Модель:</Label>
                <Drop id="model" value="Все тики (наиболее точный метод на основе всех наименьших доступных таймфреймов для генерации каждого тика)" />
                <RightCell>
                  <Label htmlFor="optimize">Оптимизация</Label>
                  <Check id="optimize" type="checkbox" checked={optimize} onChange={(e) => setOptimize(e.target.checked)} />
                </RightCell>
              </Row>
              <Row>
                <Label $w={119} htmlFor="usedate">Использовать дату</Label>
                <Check id="usedate" type="checkbox" checked={useDate} onChange={(e) => setUseDate(e.target.checked)} />
                <Label $w={91} htmlFor="from">От:</Label>
                <Drop id="from" value="2012.11.13" w={90} date />
                <Label $w={89} htmlFor="to">до:</Label>
                <Drop id="to" value="2012.11.14" w={90} date />
              </Row>
              <Row>
                <Label $w={119} htmlFor="visual">Визуализация</Label>
                <Check id="visual" type="checkbox" checked={visual} onChange={(e) => setVisual(e.target.checked)} />
                <Slider type="range" aria-label="Скорость" value={speed} onChange={(e) => setSpeed(Number(e.target.value))} />
                <PushButton type="button" $w={25} $live>&gt;&gt;</PushButton>
                <span />
                <PushButton type="button" $w={120} $live>Пропустить до</PushButton>
                <Drop id="skipto" value="2012.11.14" w={90} date live label="Пропустить до" />
              </Row>
            </Stack>
            <Stack>
              {["Свойства эксперта", "Свойства символа", "Открыть график", "Изменить эксперта"].map((b) => <PushButton type="button" key={b}>{b}</PushButton>)}
            </Stack>
            <Progress value={0} max={100} aria-label="Ход тестирования" />
            <PushButton type="button" $live $bold>Стоп</PushButton>
          </Panel>
          <TesterTabs>
            {["Настройки", "Результаты", "График", "Отчет", "Журнал"].map((t, i) => <TesterTab key={t} $active={i === 0}>{t}</TesterTab>)}
          </TesterTabs>
        </Body>
      </Tester>

      <StatusBar>
        <Hint>Для справки, нажмите F1</Hint>
        <StatusCell $w={120}>Profile 1</StatusCell>
        <StatusCell $w={98}>2012.11.06 14:00</StatusCell>
        <StatusCell $w={71}>O: 1.26081</StatusCell>
        <StatusCell $w={71}>H: 1.26119</StatusCell>
        <StatusCell $w={68}>L: 1.25897</StatusCell>
        <StatusCell $w={70}>C: 1.25996</StatusCell>
        <StatusCell $w={66}>V: 3711</StatusCell>
        <StatusCell $w={162}>
          <Svg w={24} h={12}>
            {Array.from({ length: 8 }, (_, i) => (
              <g key={i}>
                <rect x={i * 3} y={0} width={2} height={9 - i} fill="#5c8a1c" />
                <rect x={i * 3} y={10 - i} width={2} height={2 + i} fill="#173d5c" />
              </g>
            ))}
          </Svg>
          4475/4 kb
        </StatusCell>
      </StatusBar>

      <TaskBar>
        <Start aria-label="Start">
          <Svg w={44} h={36}>
            <defs>
              <radialGradient id="orb" cx=".5" cy=".85" r=".8">
                <stop offset="0" stopColor="#4fd0f2" />
                <stop offset=".5" stopColor="#1c5f96" />
                <stop offset="1" stopColor="#8fb4c8" />
              </radialGradient>
            </defs>
            <circle cx="22" cy="19" r="17" fill="url(#orb)" stroke="#6d93a6" />
            <path d="M14 12c3-2 5-1 7 0l-2 7c-2-1-4-2-7 0z" fill="#f0622a" />
            <path d="M23 13c3 1 5 1 8-1l-2 7c-3 2-5 2-8 1z" fill="#8cc63e" />
            <path d="M12 21c3-2 5-1 7 0l-2 7c-2-1-4-2-7 0z" fill="#46a3e0" />
            <path d="M21 22c3 1 5 1 8-1l-2 7c-3 2-5 2-8 1z" fill="#fbc62c" />
          </Svg>
        </Start>
        <TaskButton aria-label="Internet Explorer"><Svg><path d="M3.500 10h11c0-7-10.500-7-11-1s7 8 10 3.500" stroke="#3fb5f2" strokeWidth="2.800" /><path d="M1 16c-2-5 10-15 16-14 1 1 0 3-1 4" stroke="#f5c23a" strokeWidth="1.500" /></Svg></TaskButton>
        <TaskButton $open aria-label="Explorer"><Svg><path d="M1 3h6l1 2h8v11H1z" fill="#f5dd85" /><path d="M2 7h14v3H2z" fill="#e3ba45" /><path d="M4 17v-5q5-4 10 0v5h-3v-4H7v4z" fill="#69c1ec" /></Svg></TaskButton>
        <TaskButton aria-label="Media Player"><Svg><rect x="1" y="1" width="15" height="16" rx="1" fill="#58b4e8" /><circle cx="9" cy="9" r="6.500" fill="#f48b1c" stroke="#fff" /><path d="M7 5.500l5 3.500-5 3.500z" fill="#fff" /></Svg></TaskButton>
        <TaskButton aria-label="Calculator"><Svg><rect x="3" y="1" width="12" height="16" rx="1" fill="#7cb9dd" /><rect x="4.500" y="2.500" width="9" height="4" fill="#e4f3fb" /><path d="M5 9h8M5 12h8M5 15h8" stroke="#fff" strokeWidth="1.800" strokeDasharray="2 1" /></Svg></TaskButton>
        <TaskButton $open $active aria-label="MetaTrader"><AppMark /></TaskButton>
        <Stacked><TaskButton $open aria-label="Firefox"><Svg><circle cx="9" cy="9" r="8" fill="#2a63ad" /><path d="M2 4c-3 8 2 13 7 13s9-4 8-10c-2-5-5-5-5-5 4 4 2 10-3 10s-4-4-2-5L4 5z" fill="#f0821a" /><path d="M15 4c3 5 1 11-5 13 7 0 8-8 5-13z" fill="#fbd13c" /></Svg></TaskButton></Stacked>
        <TaskButton $open aria-label="Photoshop"><Svg><rect x="1" y="1" width="16" height="16" fill="#0a4f9e" stroke="#1b78cf" /><text x="4" y="12" fontSize="9" fontWeight="700" fontFamily="Open Sans" fill="#6fc6ff">Ps</text></Svg></TaskButton>
        <Tray>
          <Language>EN</Language>
          {trayIcons.map(([name, icon]) => <span key={name} title={name}>{icon}</span>)}
          <Clock>11:14</Clock>
          <ShowDesktop aria-label="Show desktop" />
        </Tray>
      </TaskBar>
    </Shell>
  );
};

export default App;
